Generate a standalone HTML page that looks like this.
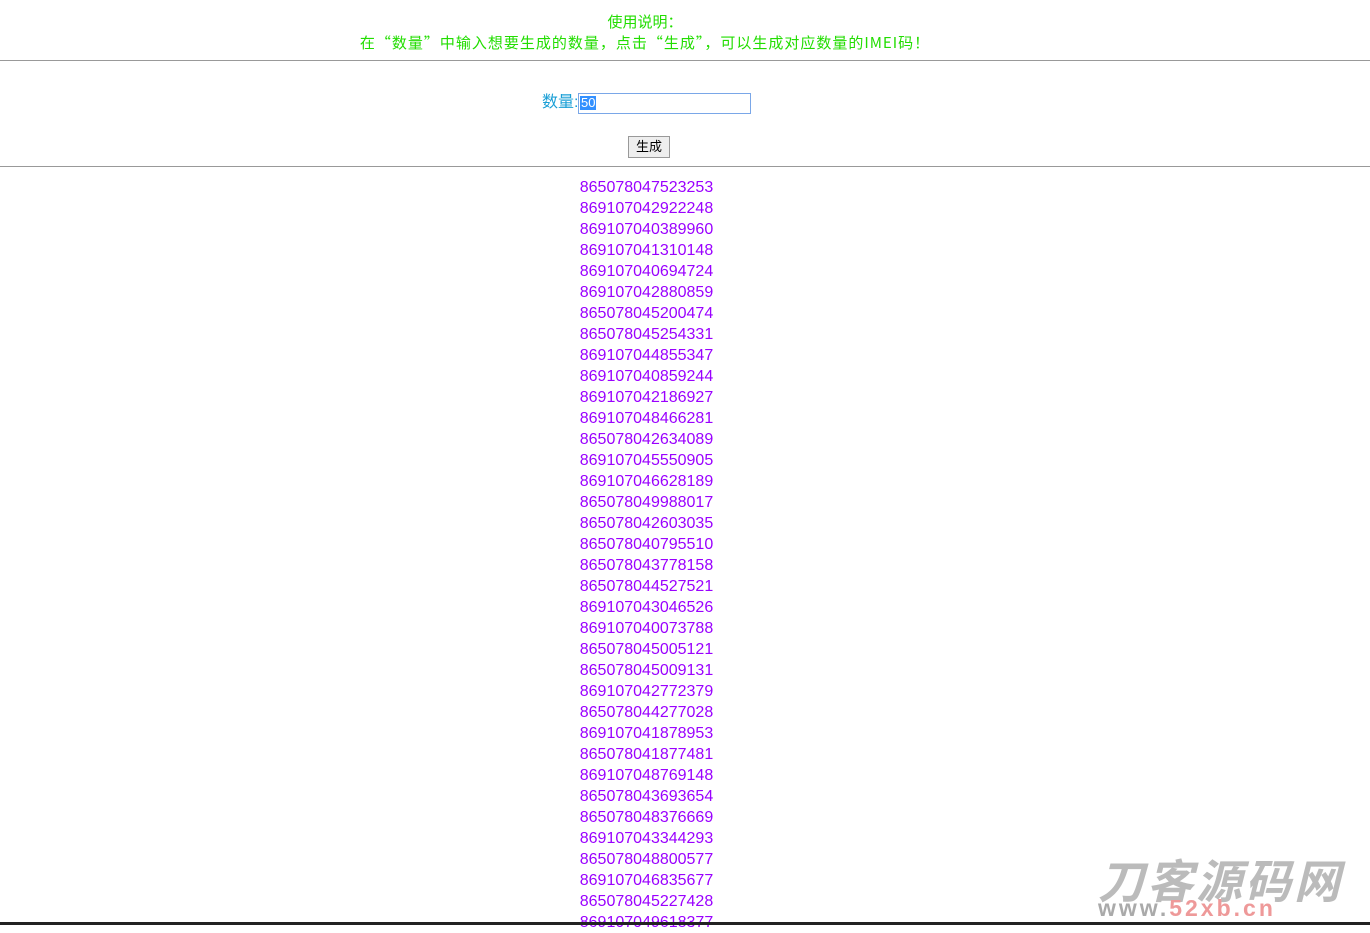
<!DOCTYPE html>
<html><head><meta charset="utf-8"><style>
body{margin:0;width:1370px;height:925px;overflow:hidden;background:#fff;font-family:"Liberation Sans","Noto Sans CJK SC",sans-serif;position:relative}
.hd{position:absolute;top:11px;left:0;width:1290px;text-align:center;color:#22dd00;font-size:15px;line-height:21px;font-family:"Noto Sans CJK SC",sans-serif}
.hd2{letter-spacing:1px}
.hr{position:absolute;left:0;width:1370px;height:1px;background:#999}
.lab{position:absolute;top:92px;left:542px;color:#1a9fd6;font-size:16px;line-height:22px}
.inp{position:absolute;top:93px;left:578px;width:171px;height:19px;border:1px solid #7aa7e8;box-sizing:content-box}
.sel{position:absolute;top:96px;left:580px;background:#3390ff;color:#fff;font-size:13px;line-height:14px;padding:0 1px}
.btn{position:absolute;top:136px;left:628px;width:40px;height:20px;border:1px solid #999;background:#eee;font-size:13px;line-height:20px;text-align:center}
.nums{position:absolute;top:177px;left:0;width:1293px;text-align:center;color:#9a00ff;font-size:16px;line-height:21px}
.wm{position:absolute;left:1098px;top:846px;font-size:46px;font-weight:bold;font-style:italic;color:#bbb;letter-spacing:3px}
.wm2{position:absolute;left:1098px;top:895px;font-size:23px;font-weight:bold;color:#aaa;letter-spacing:3px}
</style></head><body>
<div class="hd">使用说明：<br><span class="hd2">在“数量”中输入想要生成的数量，点击“生成”，可以生成对应数量的IMEI码！</span></div>
<div class="hr" style="top:60px"></div>
<div class="lab">数量:</div><div class="inp"></div><div class="sel">50</div>
<div class="btn">生成</div>
<div class="hr" style="top:166px"></div>
<div class="nums">865078047523253<br>869107042922248<br>869107040389960<br>869107041310148<br>869107040694724<br>869107042880859<br>865078045200474<br>865078045254331<br>869107044855347<br>869107040859244<br>869107042186927<br>869107048466281<br>865078042634089<br>869107045550905<br>869107046628189<br>865078049988017<br>865078042603035<br>865078040795510<br>865078043778158<br>865078044527521<br>869107043046526<br>869107040073788<br>865078045005121<br>865078045009131<br>869107042772379<br>865078044277028<br>869107041878953<br>865078041877481<br>869107048769148<br>865078043693654<br>865078048376669<br>869107043344293<br>865078048800577<br>869107046835677<br>865078045227428<br>869107049618377</div>
<div class="wm">刀客源码网</div>
<div class="wm2">www.<span style="color:#e99">52xb.cn</span></div>
<div class="hr" style="top:922px;height:3px;background:#222;width:1370px"></div>
</body></html>
